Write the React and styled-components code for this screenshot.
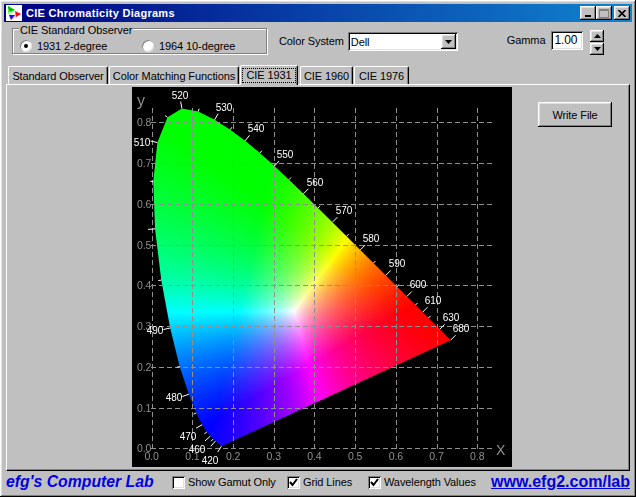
import React, { useEffect, useRef } from 'react';
import styled, { createGlobalStyle } from 'styled-components';

const GlobalStyle = createGlobalStyle`
    html, body {
        margin: 0;
        padding: 0;
        background: #c0c0c0;
    }
    body {
        font-family: "Liberation Sans", Arial, sans-serif;
        font-size: 11px;
        letter-spacing: -0.1px;
        white-space: nowrap;
        color: #000;
    }
`;

const raised = 'inset -1px -1px 0 #000, inset 1px 1px 0 #fff, inset -2px -2px 0 #808080, inset 2px 2px 0 #dfdfdf';
const sunken = 'inset 1px 1px 0 #808080, inset -1px -1px 0 #fff, inset 2px 2px 0 #000, inset -2px -2px 0 #dfdfdf';

const Window = styled.div`
    width: 636px;
    height: 497px;
    box-sizing: border-box;
    padding: 4px;
    background: #c0c0c0;
    box-shadow: ${raised};
    display: flex;
    flex-direction: column;
    overflow: hidden;
`;

const TitleBar = styled.div`
    height: 18px;
    flex: none;
    display: flex;
    align-items: center;
    padding: 0 2px;
    background: linear-gradient(90deg, #000080, #1084d0);
    color: #fff;
    font-weight: bold;
    font-size: 11px;
    letter-spacing: 0.28px;
`;

const TitleText = styled.span`
    margin-left: 4px;
    flex: 1;
`;

const WinButton = styled.button`
    width: 16px;
    height: 14px;
    padding: 0;
    border: 0;
    margin-left: ${props => props.$gap}px;
    background: #c0c0c0;
    box-shadow: ${raised};
    display: flex;
    align-items: center;
    justify-content: center;
`;

const Toolbar = styled.div`
    height: 42px;
    flex: none;
    display: flex;
    align-items: flex-start;
    padding: 6px 0 0 8px;
    box-sizing: border-box;
`;

const Group = styled.fieldset`
    width: 255px;
    height: 26px;
    box-sizing: border-box;
    margin: 0;
    padding: 0;
    border: 1px solid #808080;
    box-shadow: 1px 1px 0 #fff, inset 1px 1px 0 #fff;
    display: flex;
    position: relative;
`;

const GroupLabel = styled.span`
    position: absolute;
    left: 6px;
    top: -5px;
    padding: 0 1px;
    line-height: 12px;
    background: #c0c0c0;
`;

const RadioRow = styled.label`
    display: flex;
    align-items: center;
    width: 122px;
    padding: 10px 0 0 7px;
    box-sizing: border-box;
    height: 24px;
    gap: 5px;
`;

const RadioDot = styled.span`
    width: 12px;
    height: 12px;
    flex: none;
    border-radius: 50%;
    background: #fff;
    box-shadow: inset 1px 1px 0 #808080, inset -1px -1px 0 #dfdfdf;
    display: flex;
    align-items: center;
    justify-content: center;
    &::after {
        content: '';
        width: 4px;
        height: 4px;
        border-radius: 50%;
        background: ${props => (props.$on ? '#000' : 'transparent')};
    }
`;

const FieldLabel = styled.span`
    margin-top: ${props => props.$top}px;
    margin-left: ${props => props.$left}px;
    line-height: 14px;
`;

const Select = styled.div`
    width: 110px;
    height: 19px;
    margin: 4px 0 0 4px;
    box-sizing: border-box;
    background: #fff;
    box-shadow: ${sunken};
    display: flex;
    align-items: center;
    padding: 0 2px 0 3px;
    justify-content: space-between;
`;

const ArrowButton = styled.span`
    width: ${props => props.$w}px;
    height: ${props => props.$h}px;
    flex: none;
    background: #c0c0c0;
    box-shadow: ${raised};
    display: flex;
    align-items: center;
    justify-content: center;
`;

const GammaInput = styled.div`
    width: 32px;
    height: 19px;
    margin: 3px 0 0 6px;
    box-sizing: border-box;
    background: #fff;
    box-shadow: ${sunken};
    padding: 3px 0 0 3px;
    line-height: 13px;
    font-size: 12px;
`;

const Spinner = styled.div`
    margin: 2px 0 0 7px;
    display: flex;
    flex-direction: column;
    gap: 1px;
`;

const Tabs = styled.div`
    height: 20px;
    flex: none;
    display: flex;
    align-items: flex-end;
    padding-left: 4px;
    position: relative;
    z-index: 1;
`;

const Tab = styled.div`
    width: ${props => props.$w}px;
    height: ${props => (props.$active ? 20 : 18)}px;
    margin-right: ${props => (props.$active ? 2 : 1)}px;
    margin-bottom: ${props => (props.$active ? -1 : 0)}px;
    box-sizing: border-box;
    background: #c0c0c0;
    border-radius: 2px 2px 0 0;
    border-top: 1px solid #fff;
    border-left: 1px solid #fff;
    border-right: 1px solid #000;
    box-shadow: inset -1px 0 0 #808080;
    display: flex;
    align-items: center;
    justify-content: center;
`;

const FocusText = styled.span`
    padding: 0 3px;
    line-height: 13px;
    outline: 1px dotted #000;
`;

const Panel = styled.div`
    height: 387px;
    flex: none;
    margin: 0 2px;
    box-sizing: border-box;
    display: flex;
    padding: 2px 0 0 125px;
    border-top: 1px solid #fff;
    border-left: 1px solid #fff;
    border-right: 1px solid #000;
    border-bottom: 1px solid #000;
    box-shadow: inset -1px -1px 0 #808080;
`;

const Chart = styled.div`
    width: 380px;
    height: 380px;
    flex: none;
    position: relative;
    background: #000;
`;

const ChartCanvas = styled.canvas`
    display: block;
`;

const ChartOverlay = styled.svg`
    position: absolute;
    left: 0;
    top: 0;
    font-family: "Liberation Sans", Arial, sans-serif;
`;

const WriteButton = styled.button`
    width: 74px;
    height: 25px;
    margin: 15px 0 0 26px;
    padding: 0;
    border: 0;
    background: #c0c0c0;
    box-shadow: ${raised};
    font-family: inherit;
    font-size: 11px;
    letter-spacing: -0.1px;
    color: #000;
`;

const Footer = styled.div`
    flex: 1;
    display: flex;
    align-items: center;
    padding: 0 2px;
`;

const Brand = styled.span`
    width: 166px;
    color: #0000e0;
    font-style: italic;
    font-weight: bold;
    font-size: 15.8px;
    letter-spacing: 0;
`;

const Check = styled.label`
    width: ${props => props.$w}px;
    display: flex;
    align-items: center;
    gap: 3px;
`;

const CheckBox = styled.span`
    width: 13px;
    height: 13px;
    flex: none;
    background: #fff;
    box-shadow: ${sunken};
    display: flex;
    align-items: center;
    justify-content: center;
`;

const SiteLink = styled.a`
    margin-left: auto;
    color: #0000e0;
    font-weight: bold;
    font-size: 16px;
    letter-spacing: 0;
    text-decoration: underline;
`;

// chromaticity of the spectrum locus, 5 nm steps
const LOCUS = [
    [420, .1714, .0051], [425, .1703, .0058], [430, .1689, .0069], [435, .1669, .0086],
    [440, .1644, .0109], [445, .1611, .0138], [450, .1566, .0177], [455, .1510, .0227],
    [460, .1440, .0297], [465, .1355, .0399], [470, .1241, .0578], [475, .1096, .0868],
    [480, .0913, .1327], [485, .0687, .2007], [490, .0454, .2950], [495, .0235, .4127],
    [500, .0082, .5384], [505, .0039, .6548], [510, .0139, .7502], [515, .0389, .8120],
    [520, .0743, .8338], [525, .1142, .8262], [530, .1547, .8059], [535, .1929, .7816],
    [540, .2296, .7543], [545, .2658, .7243], [550, .3016, .6923], [555, .3373, .6589],
    [560, .3731, .6245], [565, .4087, .5896], [570, .4441, .5547], [575, .4788, .5202],
    [580, .5125, .4866], [585, .5448, .4544], [590, .5752, .4242], [595, .6029, .3965],
    [600, .6270, .3725], [605, .6482, .3514], [610, .6658, .3340], [615, .6801, .3197],
    [620, .6915, .3083], [625, .7006, .2993], [630, .7079, .2920], [680, .7347, .2653],
];

const LABELS = [
    [520, 48, 8], [530, 92, 20], [540, 124, 41], [550, 153, 67], [560, 183, 95],
    [570, 212, 123], [580, 239, 151], [590, 265, 176], [600, 286, 197], [610, 301, 213],
    [630, 319, 230], [680, 329, 241], [510, 10, 55], [490, 23, 243], [480, 42, 310],
    [470, 56, 349], [460, 65, 362], [420, 78, 373],
];

// the crowded blue end only carries a few ticks
const SKIPPED = [425, 430, 435, 440, 445, 620, 625];

const toX = x => 19.7 + 406.9 * x;
const toY = y => 361.3 - 407.6 * y;

// Dell phosphors, columns are R, G, B
const inverse = (() => {
    const [a, b, c] = [.625, .275, .15];
    const [d, e, f] = [.34, .605, .065];
    const [g, h, i] = [.035, .12, .785];
    const det = a * (e * i - f * h) - b * (d * i - f * g) + c * (d * h - e * g);
    return [
        (e * i - f * h) / det, (c * h - b * i) / det, (b * f - c * e) / det,
        (f * g - d * i) / det, (a * i - c * g) / det, (c * d - a * f) / det,
        (d * h - e * g) / det, (b * g - a * h) / det, (a * e - b * d) / det,
    ];
})();

const tracePath = (ctx) => {
    ctx.beginPath();
    LOCUS.forEach(([, x, y], n) => {
        if (n === 0) ctx.moveTo(toX(x), toY(y));
        else ctx.lineTo(toX(x), toY(y));
    });
    ctx.closePath();
};

const paintDiagram = (canvas) => {
    const size = canvas.width;
    const buffer = document.createElement('canvas');
    buffer.width = size;
    buffer.height = size;
    const bctx = buffer.getContext('2d');
    const image = bctx.createImageData(size, size);
    for (let py = 0; py < size; py++) {
        for (let px = 0; px < size; px++) {
            const x = (px + 0.5 - 19.7) / 406.9;
            const y = (361.3 - py - 0.5) / 407.6;
            const z = 1 - x - y;
            let r = Math.max(0, inverse[0] * x + inverse[1] * y + inverse[2] * z);
            let g = Math.max(0, inverse[3] * x + inverse[4] * y + inverse[5] * z);
            let b = Math.max(0, inverse[6] * x + inverse[7] * y + inverse[8] * z);
            const top = Math.max(r, g, b) || 1;
            r /= top;
            g /= top;
            b /= top;
            const at = (py * size + px) * 4;
            image.data[at] = r * 255;
            image.data[at + 1] = g * 255;
            image.data[at + 2] = b * 255;
            image.data[at + 3] = 255;
        }
    }
    bctx.putImageData(image, 0, 0);

    const ctx = canvas.getContext('2d');
    ctx.save();
    tracePath(ctx);
    ctx.clip();
    ctx.drawImage(buffer, 0, 0);
    ctx.restore();
};

const ticks = LOCUS.map(([nm, x, y], n) => {
    const prev = LOCUS[Math.max(0, n - 1)];
    const next = LOCUS[Math.min(LOCUS.length - 1, n + 1)];
    const dx = toX(next[1]) - toX(prev[1]);
    const dy = toY(next[2]) - toY(prev[2]);
    const len = Math.hypot(dx, dy) || 1;
    const size = nm % 10 === 0 ? 7 : 3;
    const px = toX(x);
    const py = toY(y);
    return { nm, x1: px, y1: py, x2: px + (dy / len) * size, y2: py - (dx / len) * size };
}).filter(t => !SKIPPED.includes(t.nm));

const GRID = [0, 1, 2, 3, 4, 5, 6, 7, 8];

const DiagramOverlay = () => (
    <ChartOverlay width="380" height="380" viewBox="0 0 380 380">
        {GRID.map(n => (
            <g key={n} stroke="#909090" strokeDasharray="5 3" shapeRendering="crispEdges">
                <line x1={Math.round(toX(n / 10)) + 0.5} x2={Math.round(toX(n / 10)) + 0.5} y1="21" y2="362" />
                <line y1={Math.round(toY(n / 10)) + 0.5} y2={Math.round(toY(n / 10)) + 0.5} x1="19" x2="360" />
            </g>
        ))}
        {ticks.map(t => (
            <line key={t.nm} x1={t.x1} y1={t.y1} x2={t.x2} y2={t.y2} stroke="#fff" />
        ))}
        {GRID.map(n => (
            <text key={n} x={toX(n / 10)} y="373" fill="#909090" fontSize="10.5" textAnchor="middle">0.{n}</text>
        ))}
        {GRID.map(n => (
            <text key={n} x="5" y={toY(n / 10) + 4} fill="#909090" fontSize="10.5">0.{n}</text>
        ))}
        <text x="5" y="19" fill="#909090" fontSize="16">y</text>
        <text x="364" y="368" fill="#909090" fontSize="14">X</text>
        {LABELS.map(([nm, x, y]) => (
            <text key={nm} x={x} y={y + 4} fill="#fff" fontSize="10" textAnchor="middle">{nm}</text>
        ))}
    </ChartOverlay>
);

const Arrow = ({ up }) => (
    <svg width="7" height="4" viewBox="0 0 7 4">
        <polygon points={up ? '3.5,0 7,4 0,4' : '0,0 7,0 3.5,4'} fill="#000" />
    </svg>
);

const Tick = () => (
    <svg width="9" height="9" viewBox="0 0 9 9">
        <path d="M1 4 L3.5 7 L8 1" fill="none" stroke="#000" strokeWidth="2" />
    </svg>
);

const AppIcon = () => (
    <svg width="16" height="16" viewBox="0 0 16 16">
        <defs>
            <linearGradient id="iconFade" x1="0" y1="0" x2="1" y2="1">
                <stop offset="0" stopColor="#00d000" />
                <stop offset="0.5" stopColor="#fff" />
                <stop offset="1" stopColor="#ff00c0" />
            </linearGradient>
        </defs>
        <rect width="16" height="16" fill="#fff" />
        <polygon points="2,1 15,9 5,15 2,8" fill="url(#iconFade)" />
        <polygon points="2,1 9,5 4,7" fill="#00c000" />
        <polygon points="9,6 15,9 10,12" fill="#f01010" />
        <polygon points="3,10 9,10 5,15" fill="#1010f0" />
    </svg>
);

export default function App() {
    const canvasRef = useRef(null);

    useEffect(() => {
        paintDiagram(canvasRef.current);
    }, []);

    return (
        <>
            <GlobalStyle />
            <Window>
                <TitleBar>
                    <AppIcon />
                    <TitleText>CIE Chromaticity Diagrams</TitleText>
                    <WinButton>
                        <svg width="8" height="8" viewBox="0 0 8 8"><rect x="1" y="6" width="6" height="2" fill="#000" /></svg>
                    </WinButton>
                    <WinButton>
                        <svg width="10" height="9" viewBox="0 0 10 9"><rect x="0.5" y="0.5" width="9" height="8" fill="none" stroke="#808080" /><rect x="0" y="0" width="10" height="2" fill="#808080" /></svg>
                    </WinButton>
                    <WinButton $gap={2}>
                        <svg width="8" height="7" viewBox="0 0 8 7"><path d="M0.5 0 L7.5 7 M7.5 0 L0.5 7" stroke="#000" strokeWidth="1.6" /></svg>
                    </WinButton>
                </TitleBar>
                <Toolbar>
                    <Group>
                        <GroupLabel>CIE Standard Observer</GroupLabel>
                        <RadioRow><RadioDot $on />1931 2-degree</RadioRow>
                        <RadioRow><RadioDot />1964 10-degree</RadioRow>
                    </Group>
                    <FieldLabel $top={6} $left={12}>Color System</FieldLabel>
                    <Select>
                        Dell
                        <ArrowButton $w={15} $h={15}><Arrow /></ArrowButton>
                    </Select>
                    <FieldLabel $top={5} $left={49}>Gamma</FieldLabel>
                    <GammaInput>1.00</GammaInput>
                    <Spinner>
                        <ArrowButton $w={14} $h={12}><Arrow up /></ArrowButton>
                        <ArrowButton $w={14} $h={12}><Arrow /></ArrowButton>
                    </Spinner>
                </Toolbar>
                <Tabs>
                    <Tab $w={100}>Standard Observer</Tab>
                    <Tab $w={130}>Color Matching Functions</Tab>
                    <Tab $w={58} $active><FocusText>CIE 1931</FocusText></Tab>
                    <Tab $w={53}>CIE 1960</Tab>
                    <Tab $w={55}>CIE 1976</Tab>
                </Tabs>
                <Panel>
                    <Chart>
                        <ChartCanvas ref={canvasRef} width="380" height="380" />
                        <DiagramOverlay />
                    </Chart>
                    <WriteButton>Write File</WriteButton>
                </Panel>
                <Footer>
                    <Brand>efg's Computer Lab</Brand>
                    <Check $w={115}><CheckBox />Show Gamut Only</Check>
                    <Check $w={81}><CheckBox><Tick /></CheckBox>Grid Lines</Check>
                    <Check $w={105}><CheckBox><Tick /></CheckBox>Wavelength Values</Check>
                    <SiteLink href="#">www.efg2.com/lab</SiteLink>
                </Footer>
            </Window>
        </>
    );
}
